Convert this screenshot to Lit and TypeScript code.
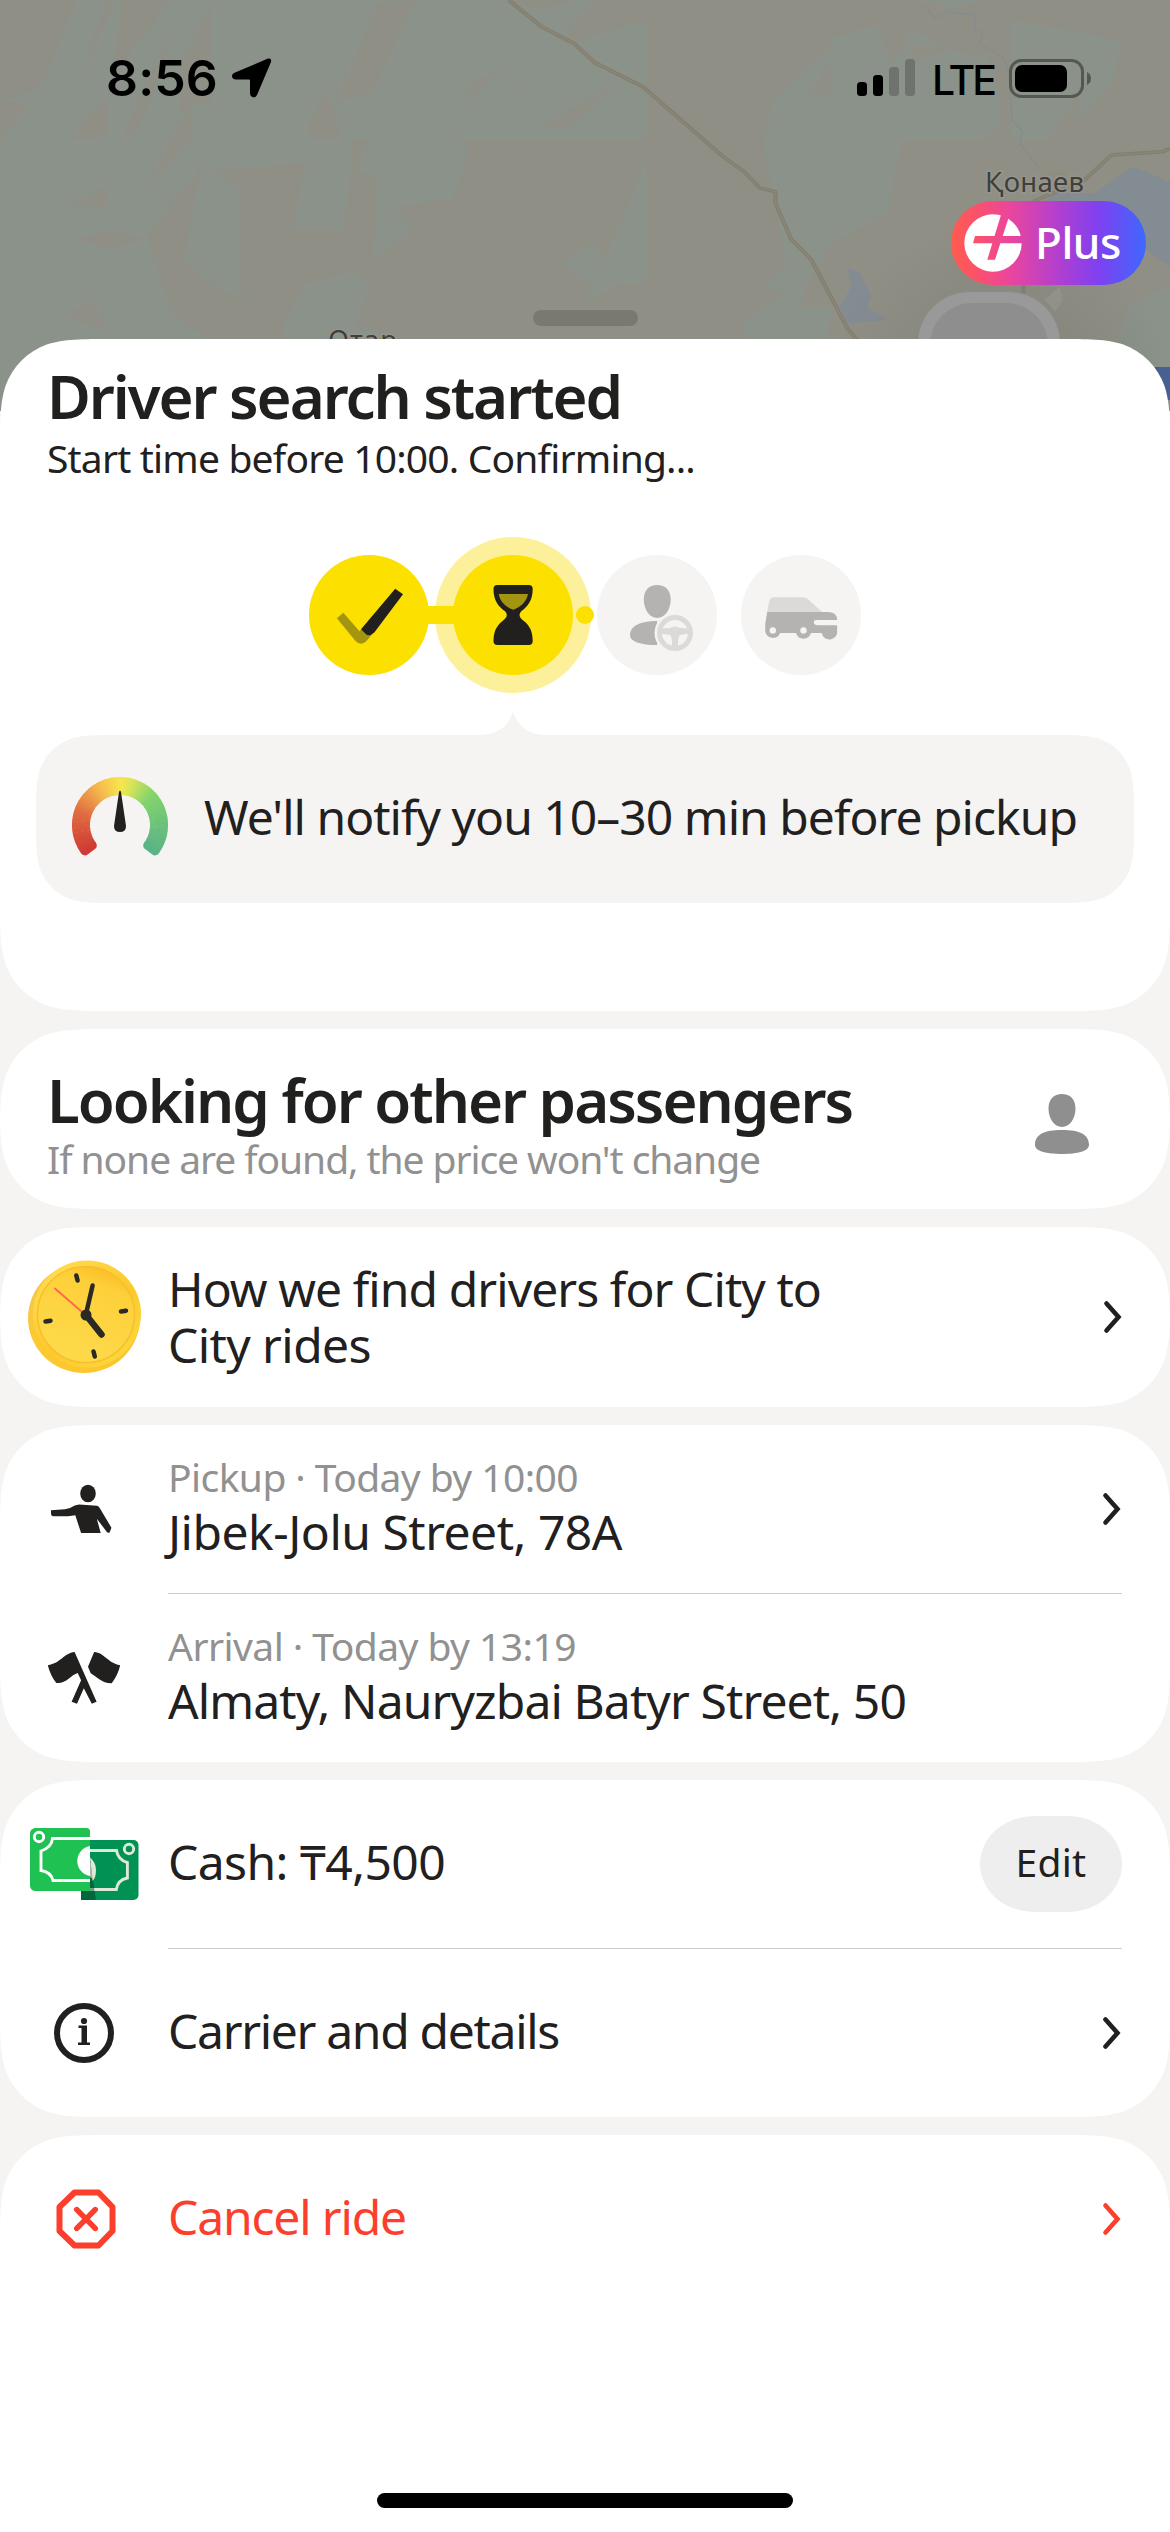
import { LitElement, html, svg, css, nothing } from "lit";
import { customElement, property } from "lit/decorators.js";
import { styleMap } from "lit/directives/style-map.js";

/** Continuous-curvature rounded rectangle, as a CSS path() clip. */
function smoothRect(w: number, h: number, r: number, corners = "all"): string {
  const a = 1.528665 * r, b = 1.088493 * r, c = 0.868407 * r, d = 0.631494 * r;
  const e = 0.372824 * r, f = 0.169059 * r, g = 0.074911 * r;
  const top =
    `M${a} 0L${w - a} 0C${w - b} 0 ${w - c} 0 ${w - d} ${g}` +
    `C${w - e} ${f} ${w - f} ${e} ${w - g} ${d}C${w} ${c} ${w} ${b} ${w} ${a}`;
  const bottom =
    corners === "top"
      ? `L${w} ${h}L0 ${h}`
      : `L${w} ${h - a}C${w} ${h - b} ${w} ${h - c} ${w - g} ${h - d}` +
        `C${w - f} ${h - e} ${w - e} ${h - f} ${w - d} ${h - g}C${w - c} ${h} ${w - b} ${h} ${w - a} ${h}` +
        `L${a} ${h}C${b} ${h} ${c} ${h} ${d} ${h - g}C${e} ${h - f} ${f} ${h - e} ${g} ${h - d}` +
        `C0 ${h - c} 0 ${h - b} 0 ${h - a}`;
  const close = `L0 ${a}C0 ${b} 0 ${c} ${g} ${d}C${f} ${e} ${e} ${f} ${d} ${g}C${c} 0 ${b} 0 ${a} 0Z`;
  return `path("${top}${bottom}${close}")`;
}

/** One line of text tracked so that it fills the given width. */
@customElement("fit-text")
class FitText extends LitElement {
  @property({ type: Number }) width = 0;
  static styles = css`
    :host { display: block; white-space: nowrap; }
    .run { display: inline-block; }
  `;
  firstUpdated() {
    const run = this.renderRoot.querySelector(".run") as HTMLElement;
    const count = (this.textContent ?? "").trim().length;
    const natural = run.getBoundingClientRect().width;
    if (this.width && count) run.style.letterSpacing = `${(this.width - natural) / count}px`;
  }
  render() {
    return html`<span class="run"><slot></slot></span>`;
  }
}

@customElement("smooth-card")
class SmoothCard extends LitElement {
  @property({ type: Number }) height = 180;
  @property() corners = "all";
  static styles = css`
    :host { display: block; }
    .card { display: flex; flex-direction: column; background: #fff; box-sizing: border-box; }
  `;
  render() {
    return html`<div class="card" style=${styleMap({
      height: `${this.height}px`,
      clipPath: smoothRect(1170, this.height, 74, this.corners),
    })}><slot></slot></div>`;
  }
}

const chevron = (color = "#21201f") => html`
  <svg class="chevron" width="20" height="34" viewBox="0 0 20 34" fill="none" stroke=${color}
    stroke-width="4.6" stroke-linecap="round" stroke-linejoin="miter"><path d="M3.5 3.5 15.5 17 3.5 30.5"/></svg>`;

const mapArt = html`
  <svg class="map" width="1170" height="411" viewBox="0 0 1170 411">
    <defs>
      <radialGradient id="shade" cx="1000" cy="390" r="170" gradientUnits="userSpaceOnUse">
        <stop offset="0" stop-color="#7d7c73" stop-opacity=".75"/><stop offset="1" stop-color="#7d7c73" stop-opacity="0"/>
      </radialGradient>
    </defs>
    <rect width="1170" height="411" fill="#908f86"/>
    <rect width="570" height="411" fill="#8a9289"/>
    <g fill="#908f86" transform="scale(.38265 .33333)">
      <path d="M0 0H200L140 170 100 265 0 305ZM0 308H80L0 415ZM0 420 25 418 0 430ZM280 0H303L262 100 215 240 240 120ZM318 0H440L395 80 345 150 310 230 300 180ZM280 290V400L262 415H190L240 330ZM462 65 430 180 360 390 342 415H320L365 290ZM550 20V310H500V418L385 560 425 460 500 310 470 340 475 180Z"/>
      <path d="M990 10 1085 0 975 270 875 308ZM855 268 895 415H808L805 380ZM1340 0H1558L1380 25ZM1550 0H1491V130L1480 105ZM1220 255 1320 200 1220 305ZM1400 190 1360 270 1345 280ZM1491 370 1480 390 1480 375Z"/>
      <path d="M1190 420H1491V770L1465 790 1491 810V1233H540V1017L450 940 385 710 525 500 480 770 560 860 670 920 625 880V560L550 515 800 490 760 690H900L918 500V418H965L930 510 990 540 970 785 1080 690 1025 620 1180 600 1220 490V440Z"/>
      <path d="M175 618 280 560V618ZM190 718 285 695 385 718 285 742ZM170 945 240 900 285 1000Z"/>
      <path fill="#8a9289" d="M740 1017V970L800 850 920 815 970 850 925 990 975 975 1010 1017Z"/>
    </g>
    <g fill="#8a9289" transform="translate(570 0) scale(.38265 .33333)">
      <path d="M0 0H60L0 95ZM0 130 200 60V418H0ZM930 0H1075L1020 25 985 28ZM680 115 760 85 870 65 805 80 840 190 865 160 885 85 985 138H890V190L985 148 1090 170 1125 300V375L1085 418H870L830 635 680 735 620 850 600 920H685L670 1017H450V965L570 870H500L565 790 505 430 530 300 590 235 680 145Z"/>
      <path d="M1150 58 1445 120 1415 250 1330 370 1335 270 1250 418H1150ZM200 480V850H130L40 915 60 865 0 810V775L65 720 85 790 110 720ZM1568 855 1455 920 1430 1017V1233H1568Z"/>
      <path fill="#908f86" d="M680 190V283H622ZM-80 385 130 240 0 385Z"/>
      <g fill="#838b93"><path d="M1235 620 1260 580H1370L1470 500 1568 545V800L1505 750 1300 760ZM725 803 755 815 788 888 775 920 828 960 725 970 705 920 735 860Z"/></g>
      <path fill="none" stroke="#858b8c" stroke-width="3" d="M925 15 955 55 985 35 1058 45V90L1080 100 1070 130 1130 170 1150 230 1155 360 1183 395 1175 430 1230 510"/>
      <g fill="none" stroke-linejoin="round">
        <path stroke="#827f71" stroke-width="11" d="M-160 0-75 80 10 130 65 188 190 260 400 470 455 515 495 563 537 575V610L578 718 630 778 725 985 750 1020M1568 445 1550 455 1415 465 1345 540 1210 605M1185 850V890"/>
        <path stroke="#8c8775" stroke-width="4" d="M-160 0-75 80 10 130 65 188 190 260 400 470 455 515 495 563 537 575V610L578 718 630 778 725 985 750 1020M1568 445 1550 455 1415 465 1345 540 1210 605"/>
        <path stroke="#8c8d6d" stroke-width="4" d="M1255 525Q1280 515 1300 525"/>
      </g>
      <path fill="#9a9892" d="M1240 900 1280 860 1288 900 1268 935Z"/>
    </g>
    <rect x="760" y="180" width="410" height="231" fill="url(#shade)"/>
    <rect x="917.5" y="291.5" width="143" height="140" rx="52" fill="#999" stroke="#8a8a88"/>
    <rect x="930" y="303" width="118" height="140" rx="42" fill="#8e8e8e"/>
    <path fill="#47608f" d="M1150 367h20v33h-20z"/>
    <g font-family="Noto Sans, sans-serif" font-size="27.5" fill="#403f3a" stroke="#96958d" stroke-width="3" paint-order="stroke">
      <text x="985" y="192" textLength="99">Қонаев</text>
      <text x="328" y="350" textLength="69">Отар</text>
    </g>
  </svg>`;

const statusIcons = html`
  <svg width="58" height="38" viewBox="0 0 58 38">
    <rect y="23" width="10" height="14" rx="3.5"/><rect x="16" y="16" width="10" height="21" rx="3.5"/>
    <g fill="#6f736d"><rect x="32" y="8" width="10" height="29" rx="3.5"/><rect x="48" width="10" height="37" rx="3.5"/></g>
  </svg>`;

const battery = html`
  <svg width="83" height="39" viewBox="0 0 83 39">
    <rect x="1.5" y="1.5" width="72" height="36" rx="11" fill="none" stroke="#555850" stroke-width="3"/>
    <rect x="6" y="6" width="52" height="27" rx="7"/><path fill="#555850" d="M78 13q4 2 4 6.500t-4 6.500z"/>
  </svg>`;

const stepIcons = [
  svg`<path fill="#a39510" d="M34.300 57.700 27.900 63.300 46.500 86q5.500 5.500 11 0l5-6-10.500-5.500-1.500 1.800z"/>
      <path fill="#21201f" d="M86.200 33.700 94 39.300 65.500 77.200q-6 6-10.500 0L52 74.300z"/>`,
  svg`<path fill="#21201f" d="M44.500 30H75.700q4 0 4 4C79.700 46 74 52 68.500 56q-4 3.800 0 8C75 69 79.700 74 79.700 86q0 4-4 4H44.500q-4 0-4-4C40.500 74 45.500 69 51.800 64q4-4.200 0-8C46 52 40.500 46 40.500 34q0-4 4-4z"/>
      <path fill="#a39510" d="M45.700 39H75C73.500 47.500 66.500 52.500 60.300 54.700 54 52.500 47 47.500 45.700 39z"/>`,
  svg`<path fill="#b4b3b1" d="M60.200 30c8 0 13.500 5 13.500 14.500C73.700 54.500 68 63 60.200 63S46.800 54.500 46.800 44.500C46.800 35 52.200 30 60.200 30z"/>
      <path fill="#b4b3b1" d="M60.200 66C43 66 33 71 33 80.200 33 86.500 43 90 60.200 90z"/>
      <circle cx="78" cy="78" r="20.500" fill="#f5f4f2"/>
      <circle cx="78" cy="78" r="15.500" fill="none" stroke="#dbdad8" stroke-width="5"/>
      <path fill="#dbdad8" d="M64 73.500 73 73q5-3 10 0l9 .5v5l-9 1.500q-2 2-2 5.500V93h-6v-7.500q0-3.500-2-5.500l-9-1.500z"/>`,
  svg`<path fill="#dbdad8" d="M33.500 42.300H61.500q3.500 0 5.500 2L81.500 57.500H26.100L28.200 46.500q1-4.200 5.300-4.200z"/>
      <path fill="#b4b3b1" fill-rule="evenodd" d="M26.200 57H87q9 0 9.100 8H75q-2.200 0-2.200 2 0 3.300 4 3.300h19.300V75.500a7.700 7.700 0 0 1-15.400 2.500H70a7.800 7.800 0 0 1-15 0H39.200a7.800 7.800 0 0 1-15-2.500V69zM31.800 72.200a3.200 3.200 0 1 0 0 6.400 3.200 3.200 0 0 0 0-6.400zM62.500 72.200a3.200 3.200 0 1 0 0 6.400 3.200 3.200 0 0 0 0-6.400z"/>`,
];

const STEPS = ["done", "active", "idle", "idle"];

/** Colour stops of the gauge, from the lower left end to the lower right one. */
const GAUGE: [number, number[]][] = [
  [0, [208, 58, 52]], [0.22, [224, 110, 64]], [0.38, [244, 184, 78]], [0.5, [248, 230, 76]],
  [0.56, [218, 228, 86]], [0.68, [132, 212, 106]], [0.82, [112, 196, 120]], [1, [90, 180, 134]],
];

function gaugeColor(t: number): string {
  const i = Math.max(1, GAUGE.findIndex(([s]) => s >= t));
  const [s0, a] = GAUGE[i - 1], [s1, b] = GAUGE[i];
  const k = (t - s0) / (s1 - s0);
  return `rgb(${a.map((v, n) => Math.round(v + (b[n] - v) * k)).join()})`;
}

function gaugeArc() {
  const from = 143, sweep = 254, n = 76;
  const pt = (deg: number) => {
    const r = (deg * Math.PI) / 180;
    return `${(48 + 39 * Math.cos(r)).toFixed(2)} ${(48 + 39 * Math.sin(r)).toFixed(2)}`;
  };
  return Array.from({ length: n }, (_, i) => {
    const a = from + (sweep * i) / n;
    const b = from + (sweep * (i + 1)) / n + (i < n - 1 ? 0.8 : 0);
    return svg`<path d="M${pt(a)}A39 39 0 0 1 ${pt(b)}" stroke=${gaugeColor((i + 0.5) / n)}/>`;
  });
}

const gauge = html`
  <svg class="gauge" width="96" height="84" viewBox="0 0 96 84" fill="none" stroke-width="18">
    <g stroke-width="9" stroke-linecap="round">
      <path stroke="#d03a34" d="M20.300 68.500 13 73.900"/><path stroke="#5ab486" d="M75.700 68.500 83 73.900"/>
    </g>
    <g>${gaugeArc()}</g>
    <path fill="#21201f" d="M47 15q1-3 2 0l5 34q0 6-6 6t-6-6z"/>
  </svg>`;

const person = html`
  <svg width="54" height="60" viewBox="0 0 54 60" fill="#8f8f8f">
    <path d="M27 0c8 0 13.500 5 13.500 14.500C40.500 24.500 34.800 33 27 33S13.500 24.500 13.500 14.500C13.500 5 19 0 27 0zM27 36c18 0 27 4.500 27 15 0 6-11 9-27 9S0 57 0 51c0-10.500 9-15 27-15z"/>
  </svg>`;

const clock = html`
  <svg width="114" height="114" viewBox="0 0 114 114">
    <defs>
      <linearGradient id="rim" x1="0" y1=".2" x2="1" y2=".7"><stop offset="0" stop-color="#f3c558"/><stop offset=".2" stop-color="#fbc931"/><stop offset="1" stop-color="#fdc52c"/></linearGradient>
      <linearGradient id="ring" x1="0" y1="0" x2=".8" y2="1"><stop offset="0" stop-color="#ffe058"/><stop offset=".6" stop-color="#fdc92d"/><stop offset="1" stop-color="#fbd83c"/></linearGradient>
      <linearGradient id="face" x1=".7" y1="0" x2=".4" y2=".8"><stop offset="0" stop-color="#fdbb25"/><stop offset=".25" stop-color="#fdd03a"/><stop offset="1" stop-color="#fdd848"/></linearGradient>
    </defs>
    <ellipse cx="56" cy="58" rx="56" ry="55" fill="url(#rim)"/>
    <ellipse cx="59" cy="54" rx="54" ry="53.500" fill="url(#ring)"/>
    <ellipse cx="58" cy="54.500" rx="48.500" ry="48" fill="url(#face)" stroke="#f8be2c" stroke-width="1.500"/>
    <g stroke="#2b2923" stroke-linecap="round" fill="none">
      <path stroke-width="4.500" d="M48.300 15.500 49.600 20.500M93 51.500l5-.8M17.500 61.500l5-.8M65.500 91.500l1.300 5"/>
      <path stroke-width="4.500" d="M58 54 64.600 25.500"/><path stroke-width="6.500" d="M58 55 73.500 74.500"/>
    </g>
    <path stroke="#ff6a4c" stroke-width="2" stroke-linecap="round" d="M27 28.500 61 58"/>
    <circle cx="58" cy="55" r="5.500" fill="#2b2923"/>
  </svg>`;

const hailing = html`
  <svg width="62" height="50" viewBox="50 1484 62 50" fill="#21201f">
    <ellipse cx="88" cy="1493.500" rx="7.800" ry="8.700"/>
    <path d="M51 1510.300 65 1509.300 70 1508Q75 1504.700 79 1504.500L97.200 1505.700Q99 1506.500 100 1508.500L111.400 1527.700 109.500 1532.700Q107.500 1533 106.500 1531.500L96.800 1518.700 100.700 1533H81.100L75.300 1515.300 68 1516.300H53Q51 1516 51 1513.500z"/>
  </svg>`;

const flags = html`
  <svg width="74" height="54" viewBox="47 1650 74 54" fill="#21201f">
    <path d="M47.800 1664.300C61 1662 64 1652 74.600 1651L96.600 1700.700 91.800 1702.700 83.800 1687.300 77 1702.700 71.600 1700.700 81.100 1679.300 77.700 1672C71 1674 66 1683 56.300 1682Q50.500 1675 47.800 1664.300zM94.100 1651C105 1652 107 1661.500 120.200 1664.300Q118 1674 111.700 1682.300C102 1682.500 97 1676 90.700 1672.300L88 1665.700z"/>
  </svg>`;

const cash = html`
  <svg width="109" height="72" viewBox="30 1828 109 72">
    <path fill="#009254" d="M81 1840H133.500a5 5 0 0 1 5 5V1895a5 5 0 0 1-5 5H81z"/>
    <path fill="#00663c" d="M81 1888H90V1860L96 1900H81z"/>
    <path fill="#1fc252" d="M35.500 1828H86.500a3.500 3.500 0 0 1 3.500 3.500V1891H35.500a5.500 5.500 0 0 1-5.500-5.500V1833.500a5.500 5.500 0 0 1 5.500-5.500z"/>
    <path fill="#fff" d="M90 1846a15.200 15.200 0 0 0 0 30z"/>
    <path fill="#dfe9d8" d="M90 1857.500q6 5 6 12.500T92.500 1881z"/><path fill="#a9b8a5" d="M90 1857.500 92.800 1879 90 1877z"/>
    <g fill="none" stroke-width="2.900">
      <path stroke="#fff" d="M90 1838.500H52.500Q52 1847 41 1851V1870.500Q51 1872 53 1880.500H90"/><circle cx="39" cy="1837" r="4.700" stroke="#fff"/>
      <path stroke="#dfe9d8" d="M90 1850.500H116.500Q118 1860 127.400 1862.500V1878Q117.500 1880 116.300 1889.500H90"/><circle cx="129" cy="1849" r="4.700" stroke="#dfe9d8"/>
    </g>
    <path fill="#00663c" opacity=".55" d="M90 1883 93.500 1883 94.500 1891H90z"/>
  </svg>`;

const info = html`
  <svg width="60" height="60" viewBox="0 0 60 60" fill="#21201f">
    <circle cx="30" cy="30" r="27" fill="none" stroke="#21201f" stroke-width="6"/>
    <circle cx="30" cy="18" r="3.100"/><path d="M24.500 22.500h8.500v17h3V42H24v-2.500h3.500V25h-3z"/>
  </svg>`;

const stop = html`
  <svg width="60" height="60" viewBox="0 0 60 60" fill="none" stroke="#fc3f2c" stroke-width="6">
    <path stroke-linejoin="round" d="M18.500 3.500h24L56.500 18v24L42.500 56.500h-24L3.500 42V18z"/>
    <path d="M20.800 20.600 39.200 39.400M39.200 20.600 20.800 39.400" stroke-width="5.600" stroke-linecap="round"/>
  </svg>`;

@customElement("app-root")
class AppRoot extends LitElement {
  static styles = css`
    :host {
      display: block; position: relative; width: 1170px; height: 2532px; overflow: hidden;
      background: #f5f4f2; color: #21201f; font-family: "Noto Sans", "Open Sans", sans-serif;
    }
    svg { display: block; flex: none; }
    .backdrop { height: 339px; }
    .map { position: absolute; left: 0; top: 0; }
    .status {
      position: absolute; left: 0; top: 0; width: 1170px; height: 156px; box-sizing: border-box;
      padding: 0 78px 0 106px; display: flex; align-items: center; color: #000; font-family: Inter, sans-serif;
    }
    .time { font-size: 50px; font-weight: 600; line-height: 60px; }
    .arrow { margin-left: 14px; }
    .right { margin-left: auto; display: flex; align-items: center; }
    .lte { font-size: 41px; font-weight: 500; line-height: 50px; margin: 3px 15px 0 17px; }
    .plus {
      position: absolute; left: 951px; top: 201px; width: 195px; height: 84px; border-radius: 42px;
      background: linear-gradient(90deg, #ff5c4d 0, #fb5268 12%, #ec469a 29%, #b23fd0 55%, #7e41f0 76%, #3f68ff 100%);
      display: flex; align-items: center; box-sizing: border-box; padding-left: 13px; color: #fff;
    }
    .plus-label { font-size: 44px; font-weight: 500; line-height: 60px; margin: 0 0 3px 13px; }
    .handle { position: absolute; left: 533px; top: 310px; width: 105px; height: 16px; border-radius: 8px; background: #7a7970; }
    .sheet { position: relative; display: flex; flex-direction: column; gap: 18px; }
    .title { font-size: 60px; line-height: 60px; font-weight: 560; }
    .caption { font-size: 39px; line-height: 48px; }
    .muted { color: #919191; }
    .text { font-size: 48px; line-height: 56px; }
    .danger { color: #fc3f2c; }
    .search { padding: 27px 36px 0; display: flex; flex-direction: column; }
    .search .title { margin-left: 11px; }
    .search .caption { margin: 8px 0 0 11px; }
    .steps { display: flex; justify-content: center; gap: 24px; margin-top: 73px; }
    .step { width: 120px; height: 120px; border-radius: 50%; background: #f5f4f2; position: relative; }
    .step svg { position: relative; }
    .done, .active { background: #fce000; }
    .active { box-shadow: 0 0 0 18px #fdf09a; }
    .done::after { content: ""; position: absolute; z-index: 1; left: 112px; top: 51px; width: 38px; height: 18px; background: #fce000; }
    .active::after { content: ""; position: absolute; left: 123px; top: 51px; width: 18px; height: 18px; border-radius: 50%; background: #fce000; }
    .notice { position: relative; margin-top: 60px; height: 168px; display: flex; align-items: center; }
    .notice-bg { position: absolute; inset: 0; background: #f5f4f2; }
    .tail { position: absolute; left: 443px; top: -24px; }
    .gauge { position: relative; margin: 0 36px 1px 36px; }
    .notice .text { position: relative; padding-bottom: 5px; }
    .passengers { display: flex; padding: 41px 81px 0 47px; justify-content: space-between; }
    .passengers .caption { margin: 5px 0 0 0; }
    .passengers svg { margin-top: 24px; }
    .row { display: flex; align-items: center; height: 168px; padding-right: 48px; }
    .row.tall { height: 180px; }
    .icon { width: 168px; flex: none; display: flex; box-sizing: border-box; }
    .body { flex: 1; padding-bottom: 5px; }
    .row.tall .body { padding-bottom: 0; }
    .body .caption { margin: -1px 0 3px; }
    .divider { height: 1px; background: #ccc; margin: 0 48px 0 168px; }
    .edit {
      width: 142px; height: 96px; border-radius: 54px / 48px; background: #eee; display: flex;
      justify-content: center; align-items: center; box-sizing: border-box; padding-bottom: 5px;
    }
    .pad28 { padding-left: 28px; } .pad30 { padding-left: 30px; } .pad47 { padding-left: 47px; }
    .pad50 { padding-left: 50px; } .pad54 { padding-left: 54px; } .pad56 { padding-left: 56px; }
    .nudge { margin-right: -1px; }
    .home { position: absolute; left: 377px; top: 2493px; width: 416px; height: 15px; border-radius: 8px; background: #000; }
  `;

  private row(opts: {
    icon: unknown; pad: string; caption?: [string, number]; lines: [string, number][];
    trailing?: unknown; danger?: boolean; tall?: boolean;
  }) {
    return html`<div class="row ${opts.tall ? "tall" : ""}">
      <div class="icon ${opts.pad}">${opts.icon}</div>
      <div class="body">
        ${opts.caption ? html`<fit-text class="caption muted" width=${opts.caption[1]}>${opts.caption[0]}</fit-text>` : nothing}
        ${opts.lines.map(([t, w]) => html`<fit-text class="text ${opts.danger ? "danger" : ""}" width=${w}>${t}</fit-text>`)}
      </div>
      ${opts.trailing ?? nothing}
    </div>`;
  }

  render() {
    return html`
      ${mapArt}
      <div class="backdrop"></div>
      <div class="handle"></div>
      <div class="status">
        <fit-text class="time" width="112">8:56</fit-text>
        <svg class="arrow" width="40" height="40" viewBox="0 0 40 40"><path d="M36 .6q4-1 3 3.400L25 37q-1.500 3-4.500 2-2.500-1-2.500-3.500V22.500q0-1-1-1H4Q.5 21.500 0 18.500-.3 16 2.500 14.700z"/></svg>
        <div class="right">${statusIcons}<fit-text class="lte" width="62">LTE</fit-text>${battery}</div>
      </div>
      <div class="plus">
        <svg width="58" height="58" viewBox="0 0 58 58">
          <defs><mask id="cross"><rect width="58" height="58" fill="#fff"/>
            <path d="M11 22H58V29.200H9zM37.900-2H46.500L31 45.700H23.300z" fill="#000"/></mask></defs>
          <circle cx="29" cy="29" r="28.700" fill="#fff" mask="url(#cross)"/>
        </svg>
        <fit-text class="plus-label" width="86">Plus</fit-text>
      </div>
      <div class="sheet">
        <smooth-card height="672">
          <div class="search">
            <fit-text class="title" width="574">Driver search started</fit-text>
            <fit-text class="caption" width="648">Start time before 10:00. Confirming...</fit-text>
            <div class="steps">
              ${STEPS.map((s, i) => html`<div class="step ${s}"><svg width="120" height="120" viewBox="0 0 120 120">${stepIcons[i]}</svg></div>`)}
            </div>
            <div class="notice">
              <div class="notice-bg" style=${styleMap({ clipPath: smoothRect(1098, 168, 54) })}></div>
              <svg class="tail" width="68" height="25" viewBox="0 0 68 25" fill="#f5f4f2"><path d="M0 24C20 23.500 29 15 34 1 39 15 48 23.500 68 24V25H0z"/></svg>
              ${gauge}
              <fit-text class="text" width="873">We'll notify you 10–30 min before pickup</fit-text>
            </div>
          </div>
        </smooth-card>
        <smooth-card height="180">
          <div class="passengers">
            <div>
              <fit-text class="title" width="805">Looking for other passengers</fit-text>
              <fit-text class="caption muted" width="713">If none are found, the price won't change</fit-text>
            </div>
            ${person}
          </div>
        </smooth-card>
        <smooth-card height="180">
          ${this.row({ icon: clock, pad: "pad28", tall: true,
            lines: [["How we find drivers for City to", 653], ["City rides", 203]],
            trailing: html`<div class="nudge">${chevron()}</div>` })}
        </smooth-card>
        <smooth-card height="337">
          ${this.row({ icon: hailing, pad: "pad50", caption: ["Pickup · Today by 10:00", 410], lines: [["Jibek-Jolu Street, 78A", 454]], trailing: chevron() })}
          <div class="divider"></div>
          ${this.row({ icon: flags, pad: "pad47", caption: ["Arrival · Today by 13:19", 408], lines: [["Almaty, Nauryzbai Batyr Street, 50", 738]] })}
        </smooth-card>
        <smooth-card height="337">
          ${this.row({ icon: cash, pad: "pad30", lines: [["Cash: ₸4,500", 277]],
            trailing: html`<div class="edit caption"><fit-text width="71">Edit</fit-text></div>` })}
          <div class="divider"></div>
          ${this.row({ icon: info, pad: "pad54", lines: [["Carrier and details", 391]], trailing: chevron() })}
        </smooth-card>
        <smooth-card height="397" corners="top">
          ${this.row({ icon: stop, pad: "pad56", lines: [["Cancel ride", 238]], trailing: chevron("#fc3f2c"), danger: true })}
        </smooth-card>
      </div>
      <div class="home"></div>
    `;
  }
}
